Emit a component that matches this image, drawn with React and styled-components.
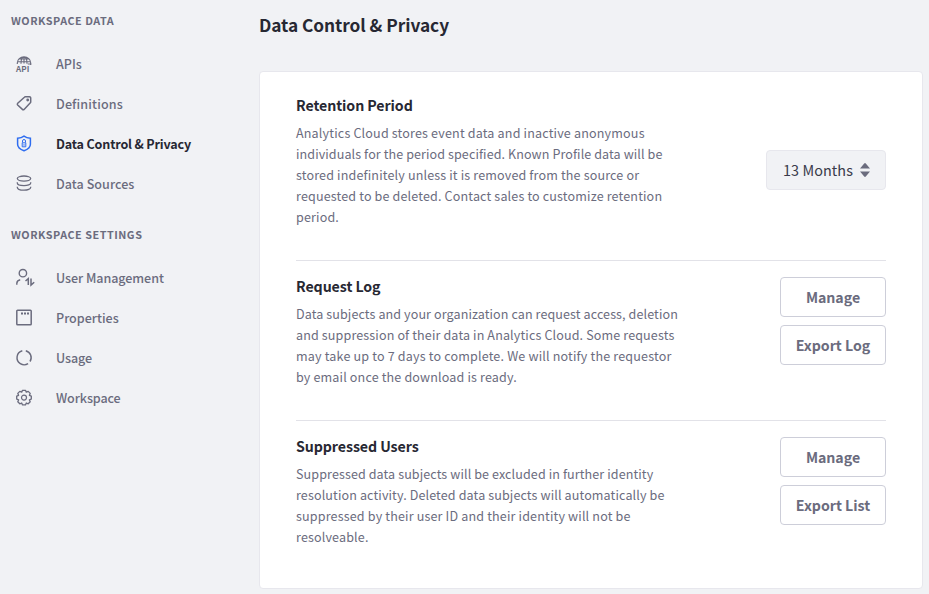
import React from 'react';
import styled, { createGlobalStyle } from 'styled-components';

const GlobalStyle = createGlobalStyle`
  * { box-sizing: border-box; }
  body {
    margin: 0;
    background: #f1f2f5;
    color: #272833;
    font-family: "Noto Sans CJK SC", "Noto Sans", sans-serif;
    overflow: hidden;
  }
`;

const Layout = styled.div`
  display: flex;
  width: 929px;
  height: 594px;
`;

const Sidebar = styled.nav`
  flex: none;
  width: 259px;
  padding-top: 11px;
  color: #6b6c7e;
`;

const SectionTitle = styled.h2`
  margin: 0 0 14px 11px;
  font-size: 10.8px;
  font-weight: 700;
  line-height: 18px;
  letter-spacing: 0.52px;
  text-transform: uppercase;
`;

const NavList = styled.ul`
  list-style: none;
  margin: 0 0 22px;
  padding: 0;
`;

const NavItem = styled.li`
  display: flex;
  align-items: center;
  height: 40px;
  padding: 2px 0 0 16px;
  font-size: 12.55px;
  line-height: 20px;
  font-weight: ${({ $active }) => ($active ? 700 : 500)};
  letter-spacing: ${({ $active, $spacing = 0 }) => ($active ? -0.17 : $spacing)}px;
  color: ${({ $active }) => ($active ? '#272833' : '#6b6c7e')};
`;

const NavIcon = styled.svg`
  flex: none;
  width: 20px;
  height: 18px;
  margin: 0 20px 1px 0;
  overflow: visible;
  fill: none;
  stroke: ${({ $active }) => ($active ? '#2e6df0' : '#6b6c7e')};
  stroke-width: 1.3;
`;

const Main = styled.main`
  flex: none;
  width: 664px;
  padding-top: 11px;
`;

const PageTitle = styled.h1`
  margin: 0 0 32px;
  font-size: 17.3px;
  font-weight: 700;
  line-height: 28px;
  letter-spacing: -0.05px;
`;

const Card = styled.div`
  height: 518px;
  padding: 16px 36px 0;
  background: #fff;
  border: 1px solid #e7e7ed;
  border-radius: 4px;
`;

const Setting = styled.section`
  display: flex;
  justify-content: space-between;
  align-items: ${({ $center }) => ($center ? 'center' : 'flex-start')};
  height: ${({ $height }) => $height}px;
  margin-bottom: 16px;
  padding-bottom: ${({ $center }) => ($center ? 8 : 0)}px;
  border-bottom: ${({ $last }) => ($last ? '0' : '1px solid #e2e2e8')};
`;

const Copy = styled.div`
  align-self: flex-start;
`;

const SettingTitle = styled.h3`
  margin: ${({ $first }) => ($first ? 7 : -1)}px 0 6px;
  font-size: 14.2px;
  font-weight: 700;
  line-height: 21px;
  letter-spacing: -0.08px;
`;

const Line = styled.div`
  font-size: 12.55px;
  line-height: 21px;
  letter-spacing: ${({ $spacing = 0.15 }) => $spacing}px;
  white-space: nowrap;
  color: #6b6c7e;
`;

const Actions = styled.div`
  display: flex;
  flex-direction: column;
  gap: 8px;
`;

const Button = styled.button`
  width: 106px;
  height: 40px;
  padding: 0;
  border: 1px solid #cdced9;
  border-radius: 4px;
  background: #fff;
  color: #6b6c7e;
  font: 700 14.2px "Noto Sans CJK SC", sans-serif;
  letter-spacing: -0.03px;
`;

const Select = styled.button`
  display: flex;
  align-items: center;
  gap: 7px;
  width: 120px;
  height: 40px;
  padding: 0 0 1px 16px;
  border: 1px solid #e7e7ed;
  border-radius: 4px;
  background: #f1f2f5;
  color: #393a4a;
  font: 400 14.4px/22px "Noto Sans CJK SC", sans-serif;
  letter-spacing: 0.08px;
`;

const Caret = styled.svg`
  width: 10px;
  height: 14px;
  fill: #6b6c7e;
`;

const ApiLabel = styled.text`
  font: 700 8px "Noto Sans CJK SC", sans-serif;
  letter-spacing: 0.2px;
  fill: #6b6c7e;
  stroke: none;
`;

const icons = {
  apis: (
    <>
      <path d="M1.3 8.9V8a6.7 6.2 0 0 1 13.4 0v2M1.5 6.7h13M3 4h10M8 1.6v7M5 8.7C5 5 6 1.9 8 1.9s3 3.1 3 6.8M11.8 9h3.6" strokeWidth="1.15" />
      <ApiLabel x="0" y="16.7">API</ApiLabel>
    </>
  ),
  definitions: (
    <>
      <path d="M9.3 1.8h4.2a1.2 1.2 0 0 1 1.2 1.2v3.9a1.2 1.2 0 0 1-.35.85L8.1 14.4a1.2 1.2 0 0 1-1.7 0L1.7 10a1.2 1.2 0 0 1 0-1.7l6.7-6.1a1.2 1.2 0 0 1 .9-.4z" strokeWidth="1.5" />
      <circle cx="11.7" cy="5" r="1.4" fill="#6b6c7e" stroke="none" />
    </>
  ),
  privacy: (
    <>
      <path d="M8 1.2c2 1.6 4 2 6.4 2v6c0 3.3-3 5.3-6.4 6.6-3.4-1.3-6.4-3.3-6.4-6.6v-6c2.4 0 4.4-.4 6.4-2z" strokeWidth="1.5" />
      <path d="M6.5 7.5V6a1.5 1.5 0 0 1 3 0v1.5M6.2 7.8h3.6v4H6.2zM8 9.2v1.5" strokeWidth="1" />
    </>
  ),
  sources: (
    <>
      <ellipse cx="8" cy="3.6" rx="6.7" ry="2.6" />
      <path d="M1.3 7.3v.7c0 1.5 3 2.6 6.7 2.6s6.7-1.1 6.7-2.6v-.7M1.3 11.8v.4c0 1.9 3 3 6.7 3s6.7-1.1 6.7-3v-.4" />
    </>
  ),
  users: (
    <>
      <circle cx="6.9" cy="4.2" r="3.7" strokeWidth="1.4" />
      <path d="M.8 15.8v-1.2c0-2.1 1.3-3.300 3.4-3.800" strokeWidth="1.4" />
      <path d="M9.500 12l2.800-2.300v6.300M15 9.400v6.700l3.200-2.900" strokeWidth="1.500" />
    </>
  ),
  properties: (
    <>
      <rect x=".8" y="1.300" width="14.400" height="14.400" rx=".8" strokeWidth="1.500" />
      <path d="M5 4.500h2M8 4.500h2M11 4.500h2" strokeWidth="2" />
    </>
  ),
  usage: (
    <path d="M6.3 1.700a7.150 7.150 0 0 0-2 12.900 7.150 7.150 0 0 0 7.800 0M9.800 1.700a7.150 7.150 0 0 1 4.200 10.800" strokeWidth="1.450" />
  ),
  workspace: (
    <>
      <path d="M6.500 1.300h3l.8 1.900 1.900-.8 2 2-.8 1.900 1.900.8v3l-1.900.8.8 1.900-2 2-1.900-.8-.8 1.900h-3l-.8-1.900-1.900.8-2-2 .8-1.900-1.900-.8v-3l1.900-.8-.8-1.900 2-2 1.900.8z" strokeLinejoin="round" strokeWidth="1.300" />
      <circle cx="8" cy="8.600" r="2.500" strokeWidth="1.200" />
    </>
  ),
};

const sections = [
  {
    title: 'Workspace Data',
    items: [
      { label: 'APIs', icon: 'apis' },
      { label: 'Definitions', icon: 'definitions', spacing: 0.14 },
      { label: 'Data Control & Privacy', icon: 'privacy', active: true },
      { label: 'Data Sources', icon: 'sources', spacing: 0.04 },
    ],
  },
  {
    title: 'Workspace Settings',
    items: [
      { label: 'User Management', icon: 'users', spacing: -0.06 },
      { label: 'Properties', icon: 'properties' },
      { label: 'Usage', icon: 'usage', spacing: -0.1 },
      { label: 'Workspace', icon: 'workspace', spacing: -0.1 },
    ],
  },
];

const settings = [
  {
    title: 'Retention Period',
    height: 173,
    period: '13 Months',
    lines: [
      ['Analytics Cloud stores event data and inactive anonymous', 0.17],
      ['individuals for the period specified. Known Profile data will be', 0.09],
      ['stored indefinitely unless it is removed from the source or'],
      ['requested to be deleted. Contact sales to customize retention'],
      ['period.'],
    ],
  },
  {
    title: 'Request Log',
    height: 144,
    actions: ['Manage', 'Export Log'],
    lines: [
      ['Data subjects and your organization can request access, deletion', 0.1],
      ['and suppression of their data in Analytics Cloud. Some requests', 0.13],
      ['may take up to 7 days to complete. We will notify the requestor', 0.17],
      ['by email once the download is ready.'],
    ],
  },
  {
    title: 'Suppressed Users',
    height: 144,
    actions: ['Manage', 'Export List'],
    lines: [
      ['Suppressed data subjects will be excluded in further identity', 0.1],
      ['resolution activity. Deleted data subjects will automatically be', 0.12],
      ['suppressed by their user ID and their identity will not be', 0.16],
      ['resolveable.'],
    ],
  },
];

export default function App() {
  return (
    <>
      <GlobalStyle />
      <Layout>
        <Sidebar>
          {sections.map((section) => (
            <React.Fragment key={section.title}>
              <SectionTitle>{section.title}</SectionTitle>
              <NavList>
                {section.items.map((item) => (
                  <NavItem key={item.label} $active={item.active} $spacing={item.spacing}>
                    <NavIcon viewBox="0 0 20 18" $active={item.active}>{icons[item.icon]}</NavIcon>
                    {item.label}
                  </NavItem>
                ))}
              </NavList>
            </React.Fragment>
          ))}
        </Sidebar>
        <Main>
          <PageTitle>Data Control &amp; Privacy</PageTitle>
          <Card>
            {settings.map((s, i) => (
              <Setting key={s.title} $height={s.height} $center={!!s.period} $last={i === settings.length - 1}>
                <Copy>
                  <SettingTitle $first={i === 0}>{s.title}</SettingTitle>
                  {s.lines.map(([text, spacing]) => (
                    <Line key={text} $spacing={spacing}>{text}</Line>
                  ))}
                </Copy>
                {s.period ? (
                  <Select>
                    {s.period}
                    <Caret viewBox="0 0 10 14">
                      <path d="M0 5.500L4.200.500q.8-.8 1.600 0L10 5.500zM0 8.500h10l-4.200 5q-.8.800-1.600 0z" />
                    </Caret>
                  </Select>
                ) : (
                  <Actions>
                    {s.actions.map((a) => <Button key={a}>{a}</Button>)}
                  </Actions>
                )}
              </Setting>
            ))}
          </Card>
        </Main>
      </Layout>
    </>
  );
}
